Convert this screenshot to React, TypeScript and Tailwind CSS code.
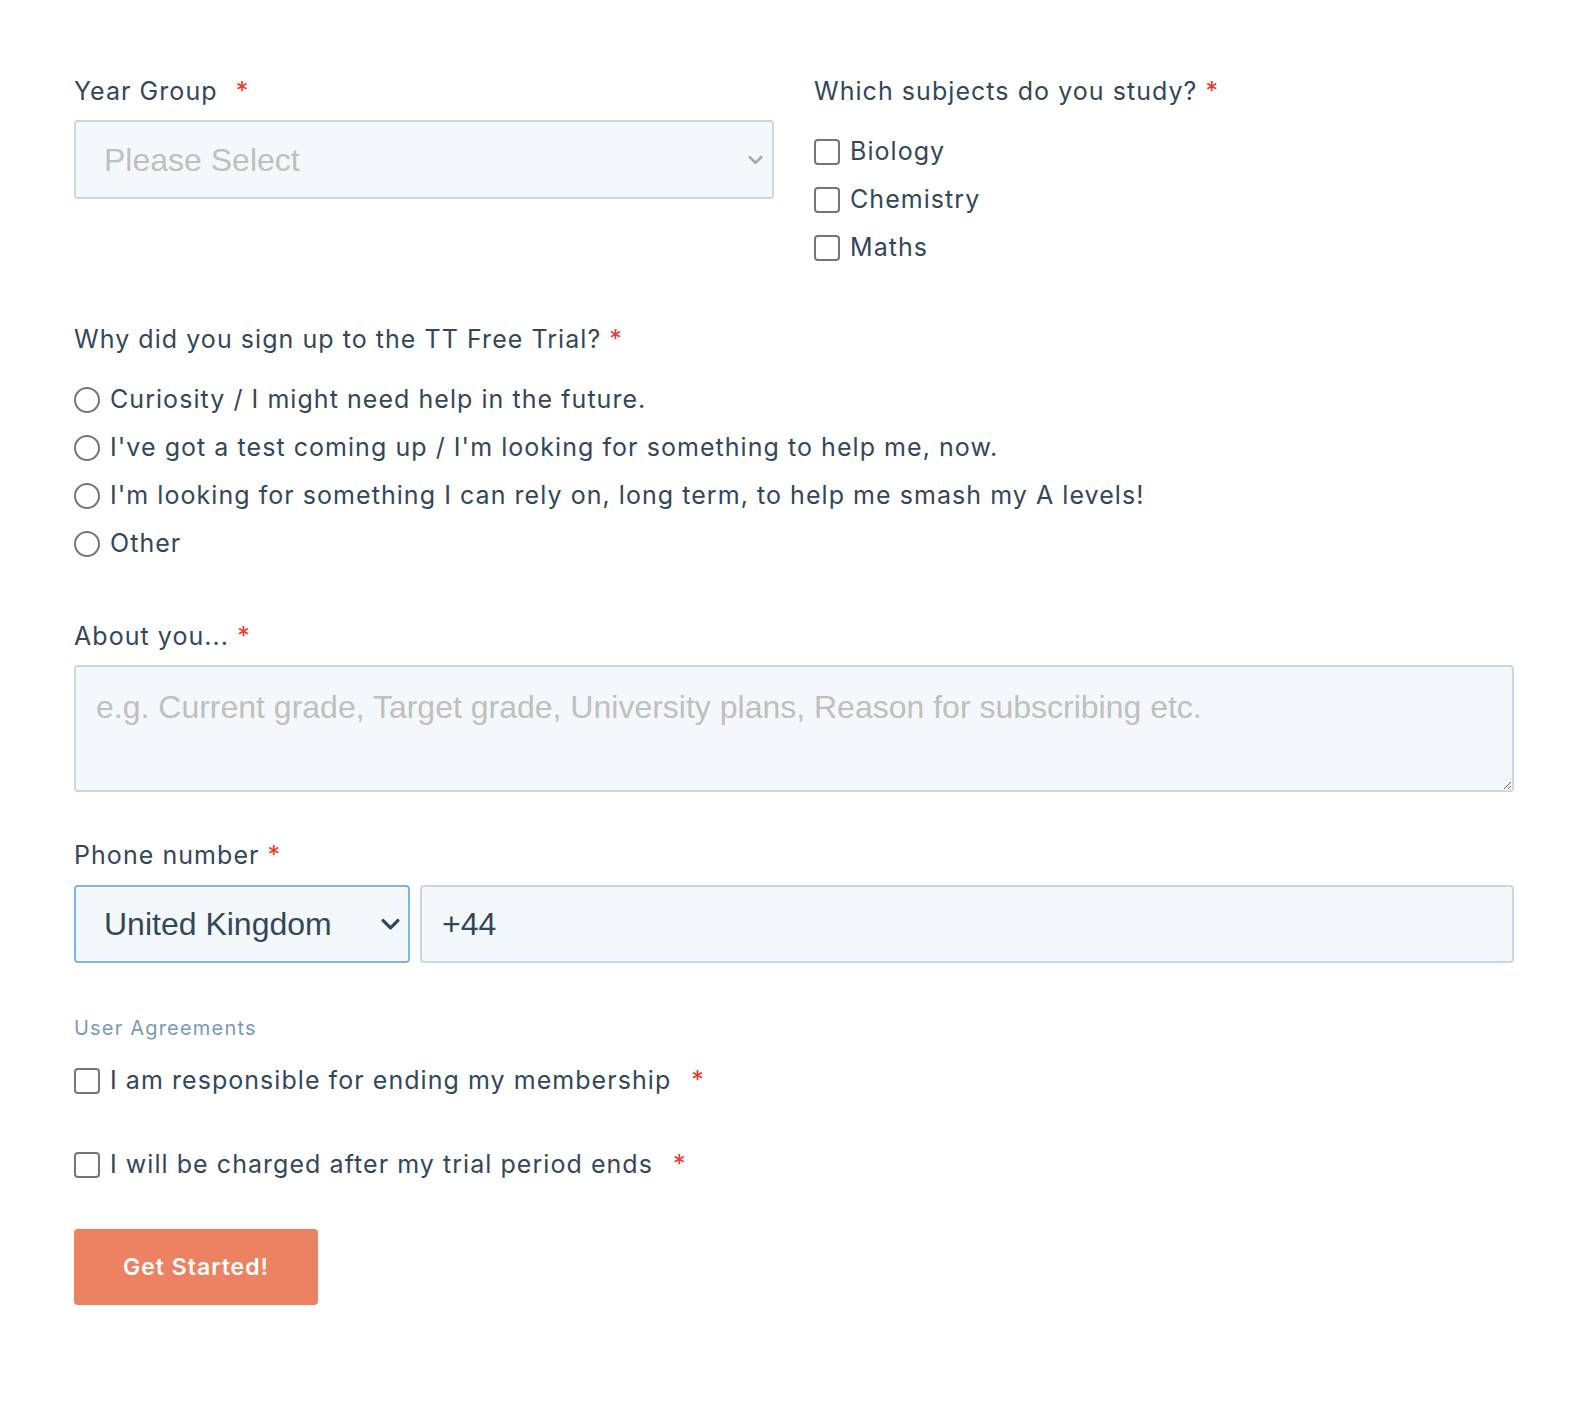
import { useState } from 'react';

const font = "font-['Inter','Noto_Sans',sans-serif]";
const body = 'text-[25px] tracking-[1.05px]';

function Req({ className = '' }: { className?: string }) {
  return <span className={`text-[#f2362b] tracking-normal ${className}`}>*</span>;
}

function Box({ round = false }: { round?: boolean }) {
  return (
    <input
      type={round ? 'radio' : 'checkbox'}
      name={round ? 'why' : undefined}
      className={`appearance-none w-[26px] h-[26px] border-2 border-[#767676] bg-white flex-shrink-0 ${
        round ? 'rounded-full' : 'rounded-[4px]'
      }`}
    />
  );
}

function Chevron({ color, w = 18 }: { color: string; w?: number }) {
  return (
    <svg width={w} height={w * 0.66} viewBox="0 0 18 12" fill="none">
      <path d="M2 2.5 9 9.5 16 2.5" stroke={color} strokeWidth="3.2" strokeLinecap="round" strokeLinejoin="round" />
    </svg>
  );
}

export default function App() {
  const [about, setAbout] = useState('');
  const subjects = ['Biology', 'Chemistry', 'Maths'];
  const reasons = [
    'Curiosity / I might need help in the future.',
    "I've got a test coming up / I'm looking for something to help me, now.",
    "I'm looking for something I can rely on, long term, to help me smash my A levels!",
    'Other',
  ];

  return (
    <div className={`min-h-[1410px] bg-white text-[#33475b] ${font}`}>
      <form className="w-[1440px] ml-[74px] pt-[73px]">
        {/* Year group + subjects */}
        <div className="grid grid-cols-2 gap-x-[40px]">
          <div>
            <label className={`block leading-[36px] ${body}`}>
              Year Group <Req className="ml-[10px]" />
            </label>
            <div className="mt-[11px] h-[79px] border-2 border-[#cbd6e2] bg-[#f5f8fa] rounded-[4px] flex items-center justify-between pl-[28px] pr-[9px]">
              <span className="font-['Liberation_Sans',Arial,sans-serif] text-[32px] text-[#bfbfbf]">Please Select</span>
              <Chevron color="#a6a6a6" w={15} />
            </div>
          </div>
          <div>
            <label className={`block leading-[36px] ${body}`}>
              Which subjects do you study? <Req />
            </label>
            <div className="mt-[19px]">
              {subjects.map((s) => (
                <label key={s} className={`flex items-center gap-[10px] h-[48px] ${body}`}>
                  <Box />
                  {s}
                </label>
              ))}
            </div>
          </div>
        </div>

        {/* Why */}
        <div className="mt-[49px]">
          <label className={`block leading-[36px] ${body}`}>
            Why did you sign up to the TT Free Trial? <Req />
          </label>
          <div className="mt-[19px]">
            {reasons.map((r) => (
              <label key={r} className={`flex items-center gap-[10px] h-[48px] ${body}`}>
                <Box round />
                {r}
              </label>
            ))}
          </div>
        </div>

        {/* About */}
        <div className="mt-[50px]">
          <label className={`block leading-[36px] ${body}`}>
            About you... <Req />
          </label>
          <textarea
            value={about}
            onChange={(e) => setAbout(e.target.value)}
            placeholder="e.g. Current grade, Target grade, University plans, Reason for subscribing etc."
            className="block mt-[11px] w-full h-[127px] border-2 border-[#cbd6e2] bg-[#f5f8fa] rounded-[4px] px-[20px] pt-[20px] font-['Liberation_Sans',Arial,sans-serif] text-[32px] leading-[40px] placeholder:text-[#bfbfbf] outline-none"
          />
        </div>

        {/* Phone */}
        <div className="mt-[45px]">
          <label className={`block leading-[36px] ${body}`}>
            Phone number <Req />
          </label>
          <div className="mt-[12px] flex gap-[10px] font-['Liberation_Sans',Arial,sans-serif] text-[32px]">
            <div className="w-[336px] h-[78px] border-2 border-[#7fb4e6] bg-[#f5f8fa] rounded-[4px] flex items-center justify-between pl-[28px] pr-[8px]">
              <span>United Kingdom</span>
              <Chevron color="#33475b" w={19} />
            </div>
            <div className="flex-1 h-[78px] border-2 border-[#cbd6e2] bg-[#f5f8fa] rounded-[4px] flex items-center pl-[20px]">
              +44
            </div>
          </div>
        </div>

        {/* Agreements */}
        <div className="mt-[50px]">
          <p className="text-[20px] leading-[30px] tracking-[1.2px] text-[#7c98b6]">User Agreements</p>
          <label className={`mt-[15px] flex items-center gap-[10px] h-[46px] ${body}`}>
            <Box />
            <span>
              I am responsible for ending my membership <Req className="ml-[12px]" />
            </span>
          </label>
          <label className={`mt-[38px] flex items-center gap-[10px] h-[46px] ${body}`}>
            <Box />
            <span>
              I will be charged after my trial period ends <Req className="ml-[12px]" />
            </span>
          </label>
        </div>

        <button
          type="button"
          className="mt-[41px] w-[244px] h-[76px] bg-[#ec8262] rounded-[4px] text-white text-[23px] tracking-[1px] font-semibold"
        >
          Get Started!
        </button>
      </form>
    </div>
  );
}
